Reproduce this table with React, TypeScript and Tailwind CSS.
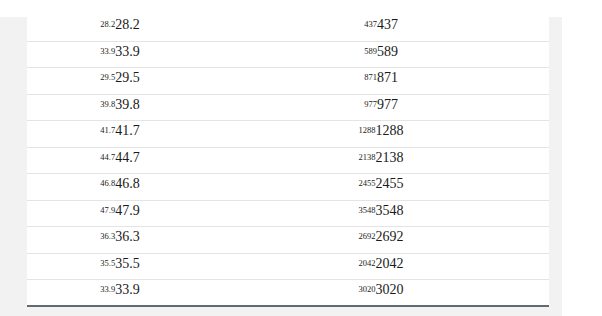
import React from "react";

const rows: [string, string][] = [
  ["28.2", "437"],
  ["33.9", "589"],
  ["29.5", "871"],
  ["39.8", "977"],
  ["41.7", "1288"],
  ["44.7", "2138"],
  ["46.8", "2455"],
  ["47.9", "3548"],
  ["36.3", "2692"],
  ["35.5", "2042"],
  ["33.9", "3020"],
];

function Cell({ v, w }: { v: string; w: string }) {
  return (
    <div className={`${w} text-center pt-[2px]`}>
      <span className="text-[8.5px] leading-none align-[2px]">{v}</span>
      <span className="text-[14px] leading-[14px]">{v}</span>
    </div>
  );
}

export default function App() {
  return (
    <div
      className="flex w-[602px] h-[316px] bg-white overflow-hidden text-[#1a1a1a]"
      style={{ fontFamily: '"Liberation Serif", "Times New Roman", serif' }}
    >
      <div className="w-[27px] mt-[17px] bg-[#f2f2f2]" />
      <div className="w-[522px] flex flex-col">
        <div className="bg-white pt-[15px]">
          {rows.map(([a, b], i) => (
            <div
              key={i}
              className={`flex h-[26.5px] box-border leading-[14px] ${
                i === rows.length - 1
                  ? "border-b-2 border-[#5f6b70]"
                  : "border-b border-[#e4e4e4]"
              }`}
            >
              <Cell v={a} w="w-[186px]" />
              <Cell v={b} w="w-[336px]" />
            </div>
          ))}
        </div>
        <div className="flex-1 bg-[#f2f2f2]" />
      </div>
      <div className="w-[13px] mt-[17px] bg-[#f2f2f2]" />
    </div>
  );
}
